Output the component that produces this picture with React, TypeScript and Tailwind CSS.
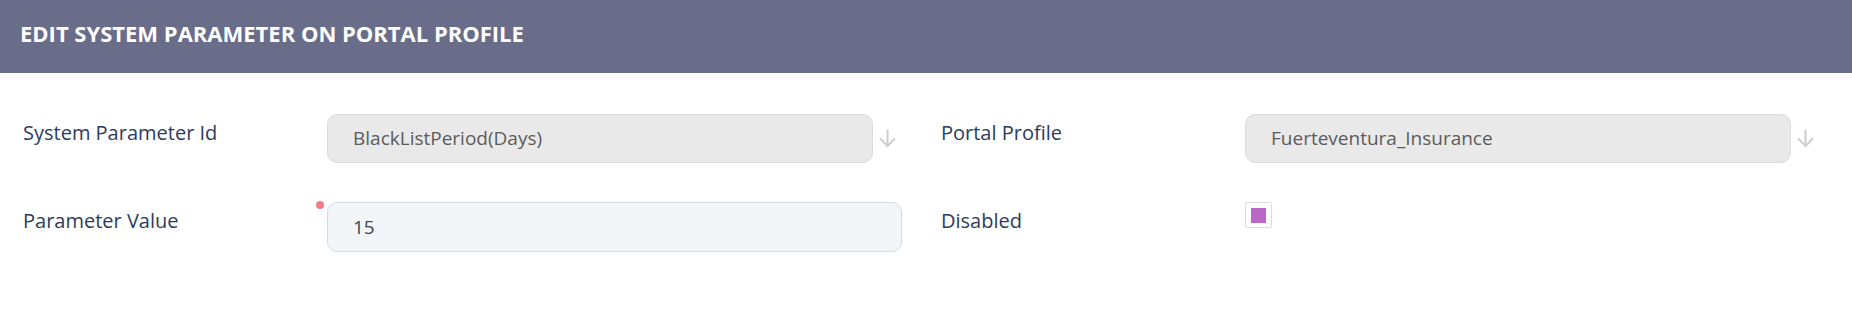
import React from "react";

const font = { fontFamily: '"Open Sans", "Noto Sans", sans-serif' };

function DownArrow() {
  return (
    <svg width="19" height="19" viewBox="0 0 18 18" fill="none" stroke="#cfcfcf" strokeWidth="2" strokeLinecap="round" strokeLinejoin="round">
      <line x1="9" y1="1.5" x2="9" y2="16" />
      <polyline points="2.5,9.5 9,16 15.5,9.5" />
    </svg>
  );
}

function Label({ children }: { children: React.ReactNode }) {
  return (
    <div className="w-[304px] shrink-0 pt-[4px] text-[20px] leading-[30px] text-[#2f3b5c]">
      {children}
    </div>
  );
}

function ReadonlySelect({ value }: { value: string }) {
  return (
    <div className="flex flex-1 items-center">
      <div className="flex h-[49px] flex-1 items-center rounded-[10px] border border-[#dcdcdc] bg-[#e9e9e9] px-[25px] text-[19px] text-[#5c5c5c]">
        {value}
      </div>
      <div className="flex w-[38px] shrink-0 pl-[5px]">
        <DownArrow />
      </div>
    </div>
  );
}

export default function App() {
  return (
    <div className="h-[310px] w-full bg-white" style={font}>
      <div className="h-[73px] bg-[#6a6d89] px-[20px] pt-[18px]">
        <h1 className="text-[22px] font-bold leading-[30px] text-white">
          EDIT SYSTEM PARAMETER ON PORTAL PROFILE
        </h1>
      </div>

      <div className="grid grid-cols-2 px-[8px] pt-[41px]">
        {/* left column */}
        <div className="flex flex-col gap-[39px] px-[15px]">
          <div className="flex items-start">
            <Label>System Parameter Id</Label>
            <ReadonlySelect value="BlackListPeriod(Days)" />
          </div>
          <div className="flex items-start">
            <Label>Parameter Value</Label>
            <div className="relative mr-[9px] flex-1">
              <span className="absolute left-[-11px] top-[-1px] h-[8px] w-[8px] rounded-full bg-[#f57b8b]" />
              <div className="flex h-[50px] items-center rounded-[10px] border border-[#d8dcdf] bg-[#f3f6f9] px-[25px] text-[19px] text-[#454545]">
                15
              </div>
            </div>
          </div>
        </div>

        {/* right column */}
        <div className="flex flex-col gap-[39px] px-[15px]">
          <div className="flex items-start">
            <Label>Portal Profile</Label>
            <ReadonlySelect value="Fuerteventura_Insurance" />
          </div>
          <div className="flex items-start">
            <Label>Disabled</Label>
            <div className="flex-1">
              <div className="flex h-[26px] w-[27px] items-center justify-center rounded-[2px] border border-[#dcdcdc] bg-white">
                <div className="h-[15px] w-[15px] bg-[#b968c7]" />
              </div>
            </div>
          </div>
        </div>
      </div>
    </div>
  );
}
